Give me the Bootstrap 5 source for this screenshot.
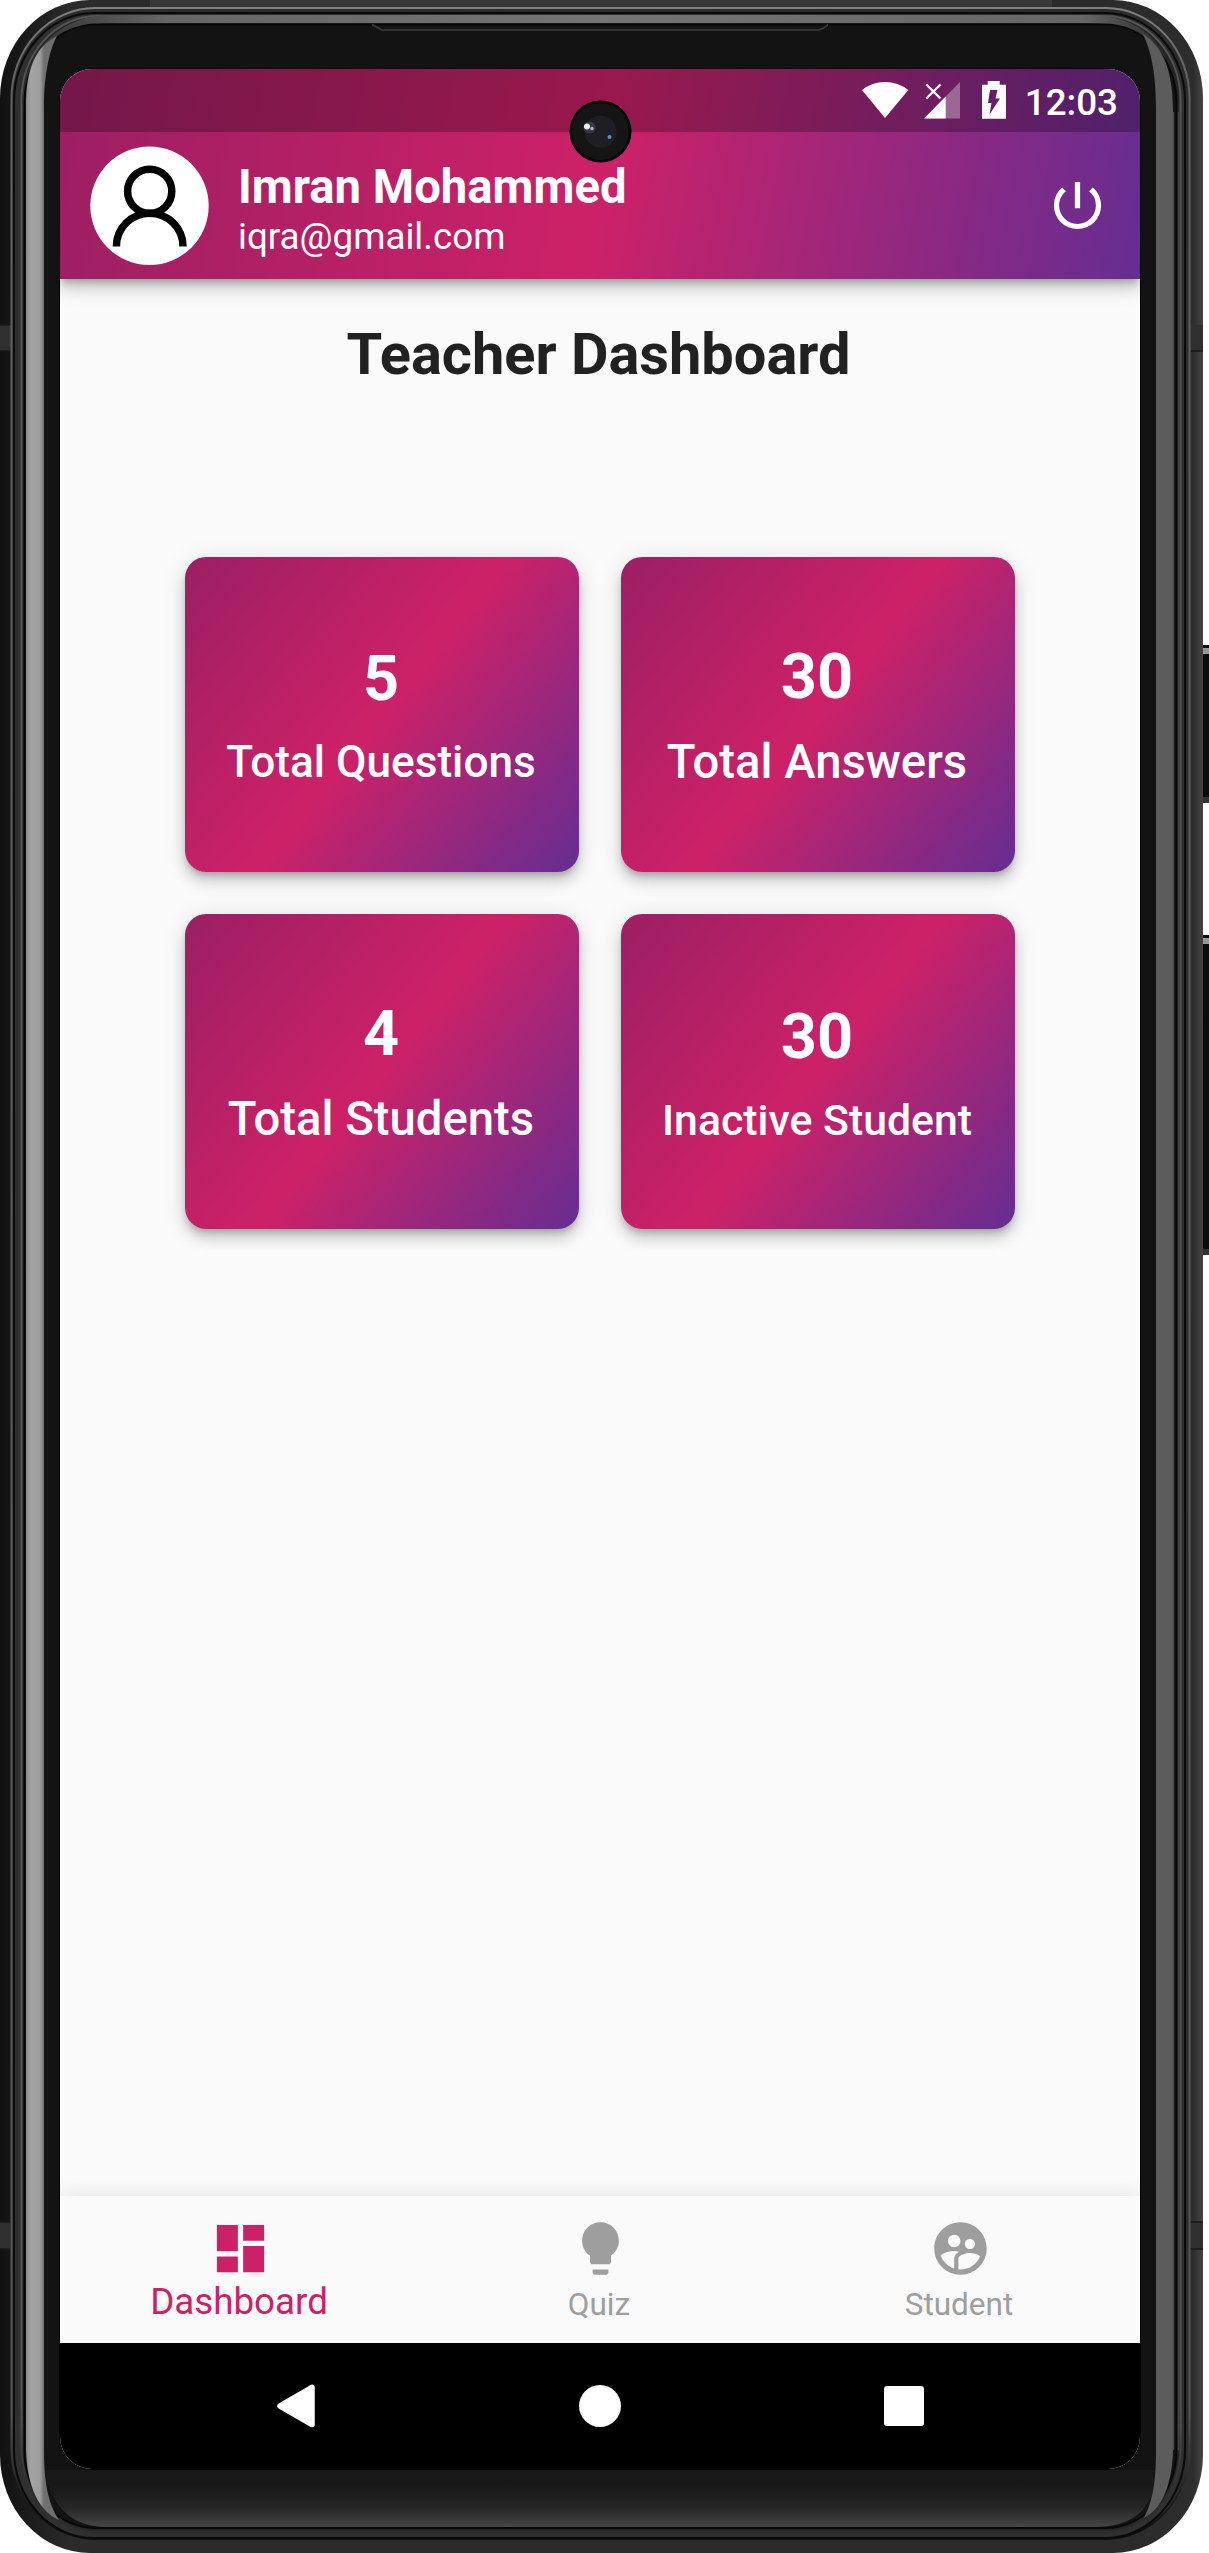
<!DOCTYPE html>
<html lang="en">
<head>
<meta charset="utf-8">
<meta name="viewport" content="width=device-width, initial-scale=1">
<title>Teacher Dashboard</title>
<link href="https://cdn.jsdelivr.net/npm/bootstrap@5.3.0/dist/css/bootstrap.min.css" rel="stylesheet">
<style>
body{background:#fff;font-family:Roboto,"Noto Sans",sans-serif;color:#212121}
.phone{width:1209px;height:2553px;padding:69px 69px 84px 60px}
.phone-frame{left:0;top:0;width:1209px;height:2553px}
.screen{width:1080px;height:2400px;border-radius:32px;background:#fafafa}
.top-area{height:210px;background:linear-gradient(101deg,#9b1f63,#cd2167 50%,#652d92);box-shadow:0 5px 6px -2px rgba(0,0,0,.2),0 10px 13px rgba(0,0,0,.14),0 3px 26px rgba(0,0,0,.12);z-index:1}
.status{height:63px;background:rgba(0,0,0,.25)}
.status .time{font-size:36.75px;line-height:43px;font-weight:500;margin:12px 22px 0 10px}
.app-header{height:147px;padding:0 31px 0 30px}
.who{margin-left:29px;padding-top:6px}
.who-name{font-size:47.25px;line-height:55px;font-weight:700;white-space:nowrap}
.who-mail{font-size:36.75px;line-height:43px;white-space:nowrap}
.page-title{font-size:57.75px;line-height:68px;font-weight:700;margin-top:41px;padding-right:3px}
.tiles{display:grid;grid-template-columns:394px 394px;gap:42px;margin-top:169px}
.tile{height:315px;border-radius:21px;background:linear-gradient(128.6deg,#9b1f63,#cd2167 50%,#652d92);box-shadow:0 5px 6px -2px rgba(0,0,0,.2),0 10px 13px rgba(0,0,0,.14),0 3px 26px rgba(0,0,0,.10);gap:21px;padding:2px 2px 0 0}
.tile-num{font-size:63px;line-height:74px;font-weight:700}
.tile-lab{font-size:47.25px;line-height:1.172;font-weight:500;white-space:nowrap}
.tile-lab.fit-q{font-size:44.2px}
.tile-lab.fit-i{font-size:42.8px}
.tabs{height:147px;background:#fafafa;box-shadow:0 0 21px rgba(0,0,0,.10);color:#9e9e9e;font-size:31.5px}
.tabs a{color:inherit;text-decoration:none;padding-top:21px;width:360px}
.tabs span{line-height:37px;margin-top:6px;padding-right:2px}
.tabs a.on{color:#cc2167}
.tabs a.on span{font-size:36.75px;line-height:43px;margin-top:0}
.sysbar{height:126px;background:#000}
.lens{left:569px;top:100px;z-index:2}
</style>
<script src="https://cdn.jsdelivr.net/npm/bootstrap@5.3.0/dist/js/bootstrap.bundle.min.js"></script>
</head>
<body>
<div class="phone position-relative overflow-hidden">
  <svg class="phone-frame position-absolute" viewBox="0 0 1209 2553" aria-hidden="true">
    <defs>
      <linearGradient id="shell" x1="0" x2="1" y1="0" y2="0"><stop offset="0" stop-color="#111"/><stop offset=".06" stop-color="#2b2b2b"/><stop offset=".94" stop-color="#2b2b2b"/><stop offset=".992" stop-color="#2d2d2d"/><stop offset="1" stop-color="#444"/></linearGradient>
      <linearGradient id="edge" x1="0" x2="0" y1="0" y2="1"><stop offset="0" stop-color="#808080"/><stop offset=".03" stop-color="#606060"/><stop offset=".95" stop-color="#555"/><stop offset=".98" stop-color="#222"/><stop offset="1" stop-color="#0c0c0c"/></linearGradient>
      <linearGradient id="inner" x1="0" x2="0" y1="0" y2="1"><stop offset="0" stop-color="#555"/><stop offset=".95" stop-color="#555"/><stop offset=".985" stop-color="#2c2c2c"/></linearGradient>
      <linearGradient id="lip" x1="0" x2="0" y1="2485" y2="2527" gradientUnits="userSpaceOnUse"><stop offset="0" stop-color="#181818"/><stop offset=".5" stop-color="#242424"/><stop offset="1" stop-color="#464646"/></linearGradient>
      <linearGradient id="topband" x1="30" x2="1175" y1="0" y2="0" gradientUnits="userSpaceOnUse"><stop offset="0" stop-color="#333"/><stop offset=".12" stop-color="#666"/><stop offset=".5" stop-color="#747474"/><stop offset=".92" stop-color="#666"/><stop offset="1" stop-color="#222"/></linearGradient>
      <linearGradient id="glareL" x1="25" x2="44" y1="0" y2="0" gradientUnits="userSpaceOnUse"><stop offset="0" stop-color="#858585"/><stop offset=".3" stop-color="#a3a3a3"/><stop offset=".8" stop-color="#9c9c9c"/><stop offset="1" stop-color="#6f6f6f"/></linearGradient>
    </defs>
    <rect x="1200" y="645" width="9" height="158" fill="#0b0b0b"/><rect x="1203" y="648" width="6" height="6" fill="#999"/><rect x="1201" y="797" width="8" height="6" fill="#333"/>
    <rect x="1200" y="935" width="9" height="320" fill="#0b0b0b"/><rect x="1203" y="938" width="6" height="6" fill="#999"/><rect x="1201" y="1249" width="8" height="6" fill="#333"/>
    <rect width="1203" height="2553" rx="90" ry="98" fill="url(#shell)"/>
    <path d="M150 0H1052V8H150Z" fill="#373737"/>
    <path d="M0 325h11v26H0zM1189 325h14v26h-14zM0 2222h10v27H0zM1190 2222h13v27h-13z" fill="#303030"/>
    <path d="M0 325h11M0 351h11M1189 351h14M0 2249h10M1190 2249h13M0 2222h10M1190 2222h13" stroke="#191919" stroke-width="1.5"/>
    <rect x="11.5" y="8" width="1178" height="2531" rx="84" ry="90" fill="#2c2c2c" stroke="url(#edge)" stroke-width="2"/>
    <rect x="14" y="13" width="1171" height="2525" rx="80" ry="88" fill="#303030" stroke="#0a0a0a" stroke-width="2"/>
    <rect x="21.500" y="16" width="1159" height="2516" rx="76" ry="84" fill="#262626" stroke="url(#inner)" stroke-width="2"/>
    <path d="M26 105C28 50 65 19 112 19H1088C1138 19 1168 45 1174 105" fill="none" stroke="url(#topband)" stroke-width="8"/>
    <rect x="24.5" y="24.500" width="1152" height="2503.500" rx="72" ry="78" fill="#131313" stroke="#080808" stroke-width="2"/>
    <path d="M44 2470H1156V2480Q1148 2527 1095 2527H106Q56 2527 44 2470Z" fill="url(#lip)"/>
    <path d="M57 36C35 47 26 70 26 106V2450C27 2488 40 2512 59 2520C48 2503 44 2482 44 2450V106C44 76 49 51 57 36Z" fill="url(#glareL)"/>
    <path d="M1142 33C1164 47 1173 72 1173 112V2450C1172 2484 1163 2508 1144 2518C1153 2500 1156 2482 1156 2450V108C1156 78 1152 50 1142 33Z" fill="#5c5c5c"/>
    <path d="M1173.500 112V2450M1178.500 112V2450" stroke="#454545" stroke-width="1.500" fill="none"/>
    <path d="M372 24.500 382 30H818Q824 29 828 24.500" fill="none" stroke="#3d3d3d" stroke-width="1.500"/>
    <rect x="59" y="68" width="1082" height="2402" rx="33" fill="#030303"/>
  </svg>

  <main class="screen position-relative d-flex flex-column overflow-hidden">
    <header class="top-area position-relative flex-shrink-0 text-white">
      <div class="status d-flex justify-content-end">
        <svg width="160" height="63" viewBox="855 69 160 63" fill="#fff" class="flex-shrink-0" aria-hidden="true">
          <path d="M885 118 862 90Q872 82 885 82T908.300 90Z"/>
          <path d="M960 82V118.500H924Z" opacity=".33"/><path d="M945.700 96.500V118.500H924Z"/>
          <path fill="none" d="M926.300 84.500 940.500 98.500M940.500 84.500 926.300 98.500" stroke="#fff" stroke-width="2.400"/>
          <path fill-rule="evenodd" d="M987.700 81h12v3.700h6.300v34h-24v-34h5.700zM990 90h7.500l-2 8.500h4.500L989.500 114.500l2-11.500h-3.500z"/>
        </svg>
        <div class="time">12:03</div>
      </div>
      <div class="app-header d-flex align-items-center">
        <svg width="119" height="119" viewBox="89.500 146.500 119 119" class="flex-shrink-0" role="img" aria-label="Profile">
          <circle cx="149" cy="206.300" r="59.200" fill="#fff"/>
          <g fill="none" stroke="#000" stroke-width="7.500"><circle cx="149.200" cy="191.800" r="22.100"/><path d="M115.900 247a33.300 33.300 0 0 1 66.600 0"/></g>
        </svg>
        <div class="who flex-grow-1">
          <div class="who-name">Imran Mohammed</div>
          <div class="who-mail">iqra@gmail.com</div>
        </div>
        <svg width="63" height="63" viewBox="0 0 24 24" fill="#fff" role="img" aria-label="Log out"><path d="M13 3h-2v10h2V3zm4.830 2.170-1.420 1.420A6.920 6.920 0 0 1 19 12c0 3.870-3.130 7-7 7s-7-3.130-7-7c0-2.190 1.010-4.140 2.580-5.420L6.170 5.170A8.932 8.932 0 0 0 3 12a9 9 0 0 0 18 0c0-2.740-1.230-5.180-3.170-6.830z"/></svg>
      </div>
    </header>

    <section class="flex-grow-1 d-flex flex-column align-items-center">
      <h1 class="page-title mb-0">Teacher Dashboard</h1>
      <div class="tiles text-white">
        <div class="tile d-flex flex-column align-items-center justify-content-center"><div class="tile-num">5</div><div class="tile-lab fit-q">Total Questions</div></div>
        <div class="tile d-flex flex-column align-items-center justify-content-center"><div class="tile-num">30</div><div class="tile-lab">Total Answers</div></div>
        <div class="tile d-flex flex-column align-items-center justify-content-center"><div class="tile-num">4</div><div class="tile-lab">Total Students</div></div>
        <div class="tile d-flex flex-column align-items-center justify-content-center"><div class="tile-num">30</div><div class="tile-lab fit-i">Inactive Student</div></div>
      </div>
    </section>

    <nav class="tabs d-flex flex-shrink-0">
      <a href="#" class="on d-flex flex-column align-items-center"><svg width="63" height="63" viewBox="0 0 24 24" fill="currentColor"><path d="M3 13h8V3H3v10zm0 8h8v-6H3v6zm10 0h8V11h-8v10zm0-18v6h8V3h-8z"/></svg><span>Dashboard</span></a>
      <a href="#" class="d-flex flex-column align-items-center"><svg width="63" height="63" viewBox="0 0 24 24" fill="currentColor"><path d="M9 21c0 .5.4 1 1 1h4c.6 0 1-.5 1-1v-1H9v1zm3-19C8.100 2 5 5.100 5 9c0 2.400 1.200 4.500 3 5.700V17c0 .5.4 1 1 1h6c.6 0 1-.5 1-1v-2.300c1.800-1.300 3-3.400 3-5.700 0-3.900-3.100-7-7-7z"/></svg><span>Quiz</span></a>
      <a href="#" class="d-flex flex-column align-items-center"><svg width="63" height="63" viewBox="0 0 24 24" fill="currentColor"><path d="M11.990 2c-5.520 0-10 4.480-10 10s4.480 10 10 10 10-4.480 10-10-4.480-10-10-10zm3.610 6.340c1.070 0 1.930.86 1.930 1.930 0 1.070-.86 1.930-1.930 1.930-1.070 0-1.930-.86-1.930-1.930-.01-1.070.86-1.930 1.930-1.930zm-6-1.580c1.300 0 2.360 1.060 2.360 2.360 0 1.300-1.060 2.360-2.360 2.360s-2.360-1.060-2.360-2.360c0-1.310 1.050-2.360 2.360-2.360zm0 9.130v3.750c-2.400-.75-4.300-2.600-5.140-4.960 1.050-1.120 3.670-1.690 5.140-1.690.53 0 1.200.08 1.900.22-1.640.87-1.900 2.020-1.900 2.680zM11.990 20c-.27 0-.53-.01-.79-.04v-4.070c0-1.420 2.940-2.130 4.400-2.130 1.070 0 2.920.39 3.840 1.150-1.170 2.970-4.060 5.090-7.450 5.090z"/></svg><span>Student</span></a>
    </nav>
    <div class="sysbar flex-shrink-0 d-flex">
      <svg width="1080" height="126" viewBox="60 2343 1080 126" fill="#fff" aria-hidden="true">
        <path d="M280 2406 312 2387.500V2424.500Z" stroke="#fff" stroke-width="5.500" stroke-linejoin="round"/>
        <circle cx="600" cy="2406" r="21"/><rect x="884" y="2386" width="40" height="40" rx="3"/>
      </svg>
    </div>
  </main>

  <svg class="lens position-absolute" width="63" height="63" viewBox="-31.500 -31.500 63 63" aria-hidden="true">
    <circle r="31" fill="#040404"/><circle r="28.500" fill="#151515"/><circle r="16" fill="#1f1e24"/>
    <circle cx="-11" cy="-4" r="6" fill="#3f5570" opacity=".5"/><circle cx="-13.500" cy="-5" r="3" fill="#eef3e4"/><circle cx="-8.500" cy="-3" r="1.700" fill="#d7a9cf"/><circle cx="9" cy="5.500" r="2" fill="#4f93d0"/>
  </svg>
</div>
</body>
</html>
